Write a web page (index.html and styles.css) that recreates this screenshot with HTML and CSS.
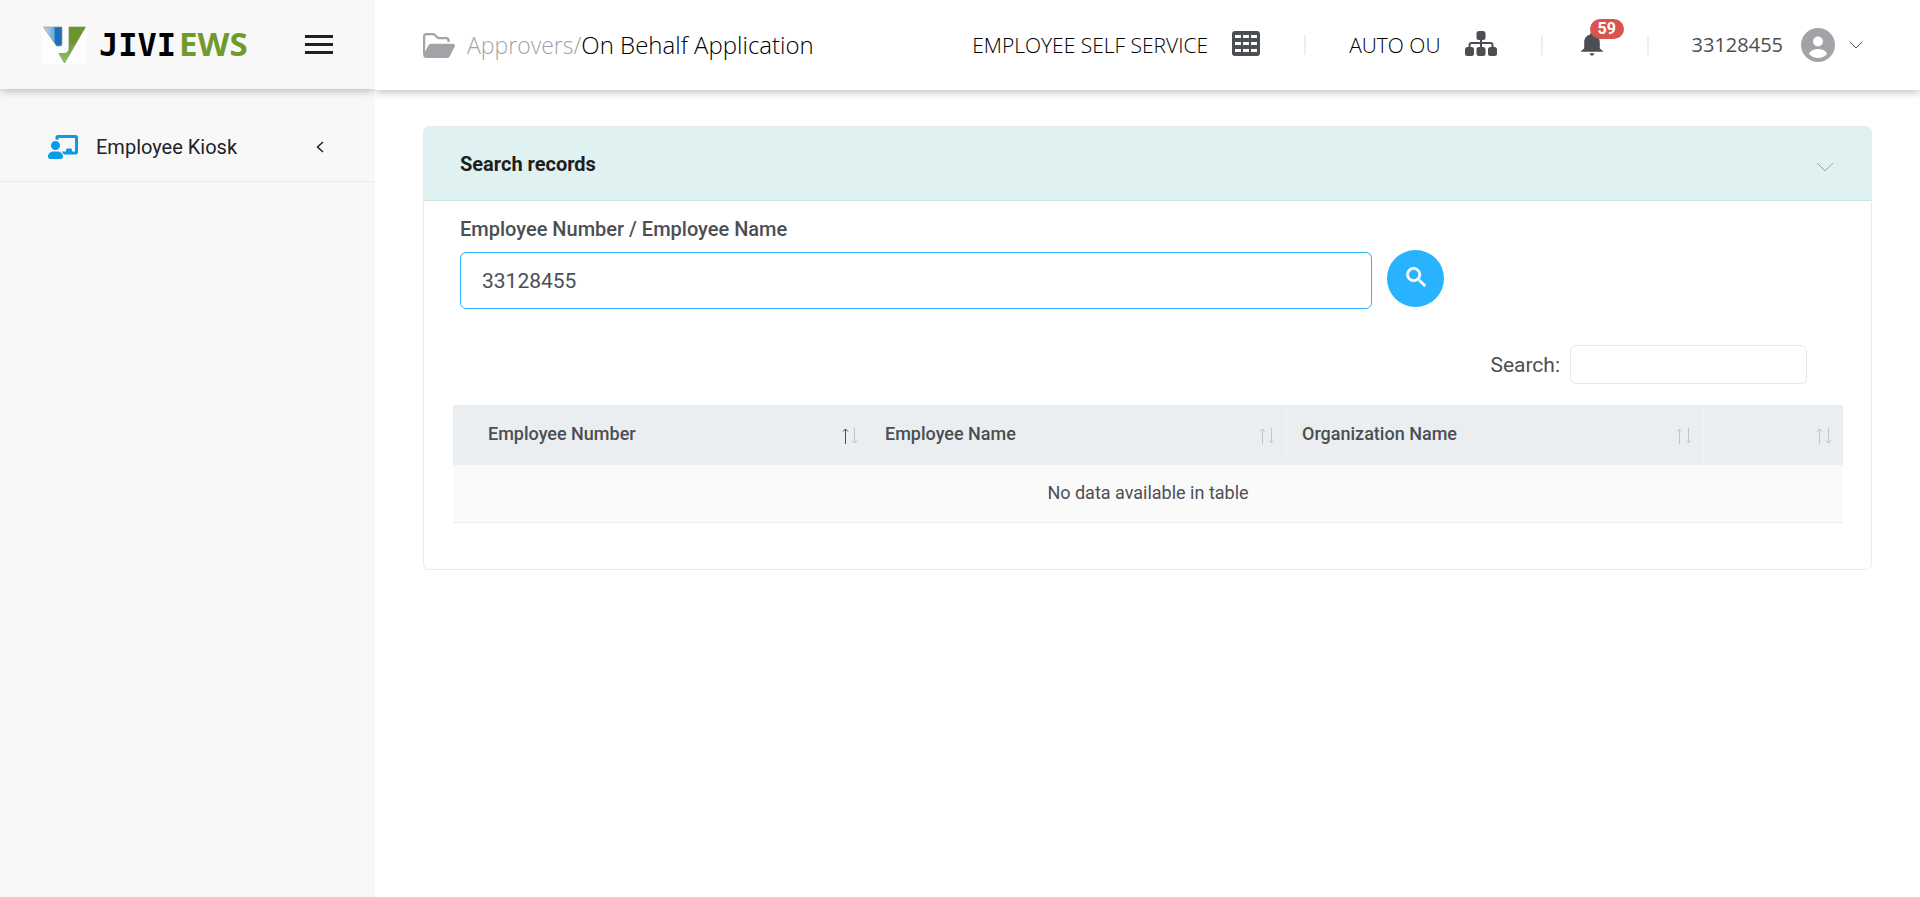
FILE: index.html
```html
<!DOCTYPE html>
<html lang="en">
<head>
<meta charset="utf-8">
<title>On Behalf Application</title>
<link rel="stylesheet" href="styles.css">
</head>
<body>
<div class="app">
  <aside class="sidebar">
    <div class="brand">
      <a class="logo" href="#">
        <svg class="logo-mark" viewBox="0 0 45 38" aria-hidden="true">
          <defs>
            <linearGradient id="blue" x1="0" x2="1"><stop offset="0" stop-color="#c4ddee"/><stop offset=".58" stop-color="#6ea6d2"/><stop offset=".62" stop-color="#1d6fbd"/><stop offset="1" stop-color="#1d6fbd"/></linearGradient>
            <linearGradient id="green" x1="0" y1="0" x2="0" y2="1"><stop offset=".4" stop-color="#6c962c"/><stop offset="1" stop-color="#8fc765"/></linearGradient>
          </defs>
          <path fill="#fdfdfd" d="M0 0h45v38H0z"/>
          <path fill="url(#blue)" stroke="#8a969c" stroke-width=".7" d="M1.500 1H20v17q0 2-2 2h-3.500z"/>
          <path fill="url(#green)" stroke="#7d8a70" stroke-width=".7" d="M27 1h16.500L22.500 37l-5.500-9.500h4.500q5.500 0 5.500-5.500z"/>
        </svg>
        <span class="logo-text">JIVI<span class="logo-accent">EWS</span></span>
      </a>
      <button class="menu" type="button" aria-label="Menu"><span></span><span></span><span></span></button>
    </div>
    <nav class="nav">
      <a class="nav-item" href="#">
        <svg class="nav-icon" viewBox="0 0 640 512" aria-hidden="true"><path d="M160 48c0-26.500 21.500-48 48-48H592c26.500 0 48 21.500 48 48V368c0 26.500-21.500 48-48 48H336.800c-11.800-25.500-29.900-47.500-52.400-64H384V320c0-17.700 14.300-32 32-32h64c17.700 0 32 14.300 32 32v32h64V64H224v49.100C205.200 102.200 183.300 96 160 96V48zm0 80a96 96 0 1 1 0 192 96 96 0 1 1 0-192zM112 352h96c61.900 0 112 50.100 112 112 0 26.500-21.500 48-48 48H48c-26.500 0-48-21.500-48-48 0-61.900 50.100-112 112-112z"/></svg>
        <span class="nav-label">Employee Kiosk</span>
        <svg class="nav-arrow" viewBox="0 0 8 12" aria-hidden="true"><path d="M7 1 1.500 6 7 11"/></svg>
      </a>
    </nav>
  </aside>
  <div class="main">
    <header class="topbar">
      <div class="crumbs">
        <svg class="folder" viewBox="0 0 576 448" aria-hidden="true"><path fill="none" stroke="currentColor" stroke-width="40" d="M20 384V64q0-44 44-44h117q19 0 32 14l45 45q12 12 30 12h128q44 0 44 44v25"/><path d="M144 192h396c28 0 44 29 30 53L478 420q-14 28-44 28H64Q8 448 4 400L96 222q16-30 48-30z"/></svg>
        <a class="crumb" href="#">Approvers/</a><span class="current">On Behalf Application</span>
      </div>
      <div class="tools">
        <button class="tool" type="button">EMPLOYEE SELF SERVICE
          <svg class="icon-grid" viewBox="0 0 28 25" aria-hidden="true"><path fill-rule="evenodd" d="M3 0h22a3 3 0 0 1 3 3v19a3 3 0 0 1-3 3H3a3 3 0 0 1-3-3V3a3 3 0 0 1 3-3zm0 4v3h6V4zm8 0v3h6V4zm8 0v3h6V4zM3 11v3h6v-3zm8 0v3h6v-3zm8 0v3h6v-3zM3 18v3h6v-3zm8 0v3h6v-3zm8 0v3h6v-3z"/></svg>
        </button>
        <button class="tool tool-unit" type="button">AUTO OU
          <svg class="icon-tree" viewBox="0 0 32 25" aria-hidden="true"><rect x="11.500" width="9" height="9" rx="2.500"/><rect y="16" width="9" height="9" rx="2.500"/><rect x="11.500" y="16" width="9" height="9" rx="2.500"/><rect x="23" y="16" width="9" height="9" rx="2.500"/><path fill="none" stroke="currentColor" stroke-width="2" d="M16 8v9M4.500 17v-3q0-2 2-2h19q2 0 2 2v3"/></svg>
        </button>
        <button class="tool tool-bell" type="button" aria-label="Notifications">
          <svg class="icon-bell" viewBox="0 0 24 25" aria-hidden="true"><path d="M12 0c1.200 0 2 .8 2 2 4 1 6.500 4.200 6.500 8.500V17l3.500 3.500V21H0v-.5L3.500 17v-6.500C3.500 6.200 6 3 10 2c0-1.200.8-2 2-2zM9.500 22.500h5c-.3 1.500-1.200 2.500-2.500 2.500s-2.200-1-2.500-2.500z"/></svg>
          <span class="badge">59</span>
        </button>
        <button class="tool tool-user" type="button">33128455
          <svg class="icon-user" viewBox="0 0 34 34" aria-hidden="true"><circle cx="17" cy="17" r="17" fill="#a1a3a6"/><circle cx="17" cy="13.500" r="5" fill="#fff"/><path fill="#fff" d="M8 26c1-3.500 5-5 9-5s8 1.500 9 5c-2.500 2.700-5.500 4-9 4s-6.500-1.300-9-4z"/></svg>
          <svg class="icon-down" viewBox="0 0 14 8" aria-hidden="true"><path d="m1 1 6 6 6-6"/></svg>
        </button>
      </div>
    </header>
    <main class="content">
      <section class="card">
        <div class="card-head">
          <h2 class="card-title">Search records</h2>
          <button class="collapse" type="button" aria-label="Collapse"><svg viewBox="0 0 18 10" aria-hidden="true"><path d="m1 1 8 8 8-8"/></svg></button>
        </div>
        <form class="lookup">
          <label class="lookup-label" for="employee">Employee Number / Employee Name</label>
          <div class="lookup-row">
            <input class="lookup-input" id="employee" type="text" value="33128455">
            <button class="lookup-button" type="button" aria-label="Search"><svg viewBox="0 0 18 18" aria-hidden="true"><path stroke="currentColor" stroke-width=".5" d="M12.900 11.300h-.8l-.3-.3a6.500 6.500 0 1 0-.7.700l.3.300v.8l5 5 1.500-1.500zm-6 0a4.500 4.500 0 1 1 0-9 4.500 4.500 0 0 1 0 9z"/></svg></button>
          </div>
        </form>
        <div class="filter">
          <label for="filter">Search:</label>
          <input class="filter-input" id="filter" type="search">
        </div>
        <div class="table-wrap">
          <table class="records">
            <colgroup><col class="col-number"><col class="col-name"><col class="col-org"><col class="col-action"></colgroup>
            <thead>
              <tr>
                <th><div class="th"><span>Employee Number</span><svg class="sort sort-asc" viewBox="0 0 16 16"><path class="up" d="M3.500 16V1M1 3.500l2.500-2.500 2.500 2.500"/><path class="down" d="M12.500 0v15M10 12.500l2.500 2.500 2.500-2.500"/></svg></div></th>
                <th><div class="th"><span>Employee Name</span><svg class="sort" viewBox="0 0 16 16"><path class="up" d="M3.500 16V1M1 3.500l2.500-2.500 2.500 2.500"/><path class="down" d="M12.500 0v15M10 12.500l2.500 2.500 2.500-2.500"/></svg></div></th>
                <th><div class="th"><span>Organization Name</span><svg class="sort" viewBox="0 0 16 16"><path class="up" d="M3.500 16V1M1 3.500l2.500-2.500 2.500 2.500"/><path class="down" d="M12.500 0v15M10 12.500l2.500 2.500 2.500-2.500"/></svg></div></th>
                <th><div class="th"><span></span><svg class="sort" viewBox="0 0 16 16"><path class="up" d="M3.500 16V1M1 3.500l2.500-2.500 2.500 2.500"/><path class="down" d="M12.500 0v15M10 12.500l2.500 2.500 2.500-2.500"/></svg></div></th>
              </tr>
            </thead>
            <tbody><tr><td colspan="4">No data available in table</td></tr></tbody>
          </table>
        </div>
      </section>
    </main>
  </div>
</div>
</body>
</html>
```
FILE: styles.css
```css
* { box-sizing: border-box; }
body { margin: 0; background: #fff; color: #4b4f54; font: 18px/26px Roboto, "Liberation Sans", sans-serif; }
a { color: inherit; text-decoration: none; }
button { margin: 0; padding: 0; border: 0; background: none; color: inherit; font: inherit; cursor: pointer; }
svg { display: block; flex: none; fill: currentColor; overflow: visible; }

.app { display: flex; min-height: 100vh; }

.sidebar { flex: none; width: 375px; background: #f8f8f8; }
.brand { display: flex; align-items: center; justify-content: space-between; height: 89px; padding: 0 42px; box-shadow: 0 2px 8px rgba(0, 0, 0, .26); clip-path: inset(0 0 -12px 0); }
.logo { display: flex; align-items: center; gap: 12px; }
.logo-mark { width: 45px; height: 38px; }
.logo-text { display: flex; align-items: baseline; gap: 3px; color: #000; font: 700 32px/38px "DejaVu Sans Mono", monospace; }
.logo-accent { color: #6f9a2d; font: 700 33px/38px "Noto Sans", sans-serif; }
.menu { display: grid; gap: 5px; width: 28px; }
.menu span { height: 3px; background: #1f2026; }

.nav { padding-top: 24px; }
.nav-item { display: flex; align-items: center; gap: 18px; height: 69px; padding: 0 51px 0 48px; border-bottom: 1px solid #ebebeb; color: #222329; font-size: 20px; }
.nav-icon { width: 30px; height: 24px; color: #079be8; }
.nav-label { flex: 1; }
.nav-arrow { width: 8px; height: 12px; fill: none; stroke: #222; stroke-width: 1.5; }

.main { flex: 1; min-width: 0; }
.topbar { display: flex; align-items: center; justify-content: space-between; height: 90px; padding: 0 57px 0 48px; box-shadow: 0 2px 8px rgba(0, 0, 0, .26); clip-path: inset(0 0 -12px 0); font-family: "Open Sans", sans-serif; font-weight: 300; }
.crumbs { display: flex; align-items: baseline; font-size: 24px; }
.folder { align-self: center; width: 32px; height: 25px; margin-right: 12px; color: #a1a3a6; }
.crumb { color: #a1a3a6; font-size: 23px; }
.current { color: #000; }
.tools { display: flex; align-items: center; font-size: 21px; }
.tool { display: flex; align-items: center; white-space: nowrap; color: #000; gap: 24px; }
.tool + .tool { border-left: 2px solid #eee; height: 20px; margin-left: 44px; padding-left: 43px; }
.tool svg { color: #4b4f54; }
.icon-grid, .icon-tree, .icon-bell { margin-bottom: 3px; }
.icon-grid { width: 28px; height: 25px; }
.icon-tree { width: 32px; height: 25px; }
.icon-bell { width: 22px; height: 24px; }
.icon-user { width: 34px; height: 34px; }
.icon-down { width: 14px; height: 8px; fill: none; stroke: #4b4f54; }
.tool + .tool-bell { position: relative; padding-left: 38px; }
.tool + .tool-user { gap: 18px; color: #4b4f54; font-size: 20px; font-weight: 400; }
.tool-user .icon-down { margin-left: -4px; }
.badge { position: absolute; left: 47px; top: -16px; padding: 0 8px; border-radius: 10px; background: #d9534f; color: #fff; font: 700 16px/20px Roboto, sans-serif; }

.content { padding: 36px 48px; }
.card { border: 1px solid #ebebeb; border-radius: 6px; padding-bottom: 46px; overflow: hidden; }
.card-head { display: flex; align-items: center; justify-content: space-between; height: 74px; padding: 0 37px 0 36px; border-bottom: 1px solid #cfe3e2; background: #dff1f0; }
.card-title { margin: 0; color: #1d1f21; font-size: 20px; font-weight: 700; line-height: 26px; }
.collapse { padding-top: 6px; }
.collapse svg { width: 18px; height: 10px; fill: none; stroke: #98a6a7; }

.lookup { padding: 15px 36px 0; }
.lookup-label { display: block; margin-bottom: 8px; font-size: 20px; font-weight: 500; }
.lookup-row { display: grid; grid-template-columns: 912fr 448fr; gap: 15px; }
.lookup-input { width: 100%; height: 57px; margin-top: 2px; padding: 0 21px; border: 1px solid #29b2fe; border-radius: 6px; background: #fff; color: #4b4f54; font: 21px/26px Roboto, sans-serif; }
.lookup-button { display: grid; place-items: center; width: 57px; height: 57px; padding-bottom: 3px; border-radius: 50%; background: #29b2fe; color: #fff; }
.lookup-button svg { width: 20px; height: 20px; }

.filter { display: flex; align-items: center; justify-content: flex-end; gap: 10px; padding: 36px 64px 21px 36px; font-size: 21px; }
.filter-input { width: 237px; height: 39px; padding: 0 10px; border: 1px solid #e4e6e8; border-radius: 6px; background: #fff; font: inherit; }

.table-wrap { padding: 0 28px 0 29px; }
.records { width: 100%; border-collapse: separate; border-spacing: 0; table-layout: fixed; }
.col-number { width: 30%; }
.col-name { width: 30%; }
.col-org { width: 30%; }
.col-action { width: 10%; }
.records th { height: 60px; padding: 0 11px 0 15px; border-right: 1px solid #f0f2f4; border-top: 1px solid #eee; border-bottom: 3px solid #eee; background: #eaeef1; font-weight: 500; text-align: left; }
.records th:first-child { padding-left: 35px; }
.records th:last-child { border-right: 0; }
.th { display: flex; align-items: center; justify-content: space-between; }
.sort { width: 16px; height: 16px; margin-top: 4px; fill: none; stroke: #c0c3c7; }
.sort-asc .up { stroke: #4b4f54; }
.records td { height: 58px; padding: 0 0 2px; border-bottom: 1px solid #eaeaea; background: #fafafa; text-align: center; }
```
